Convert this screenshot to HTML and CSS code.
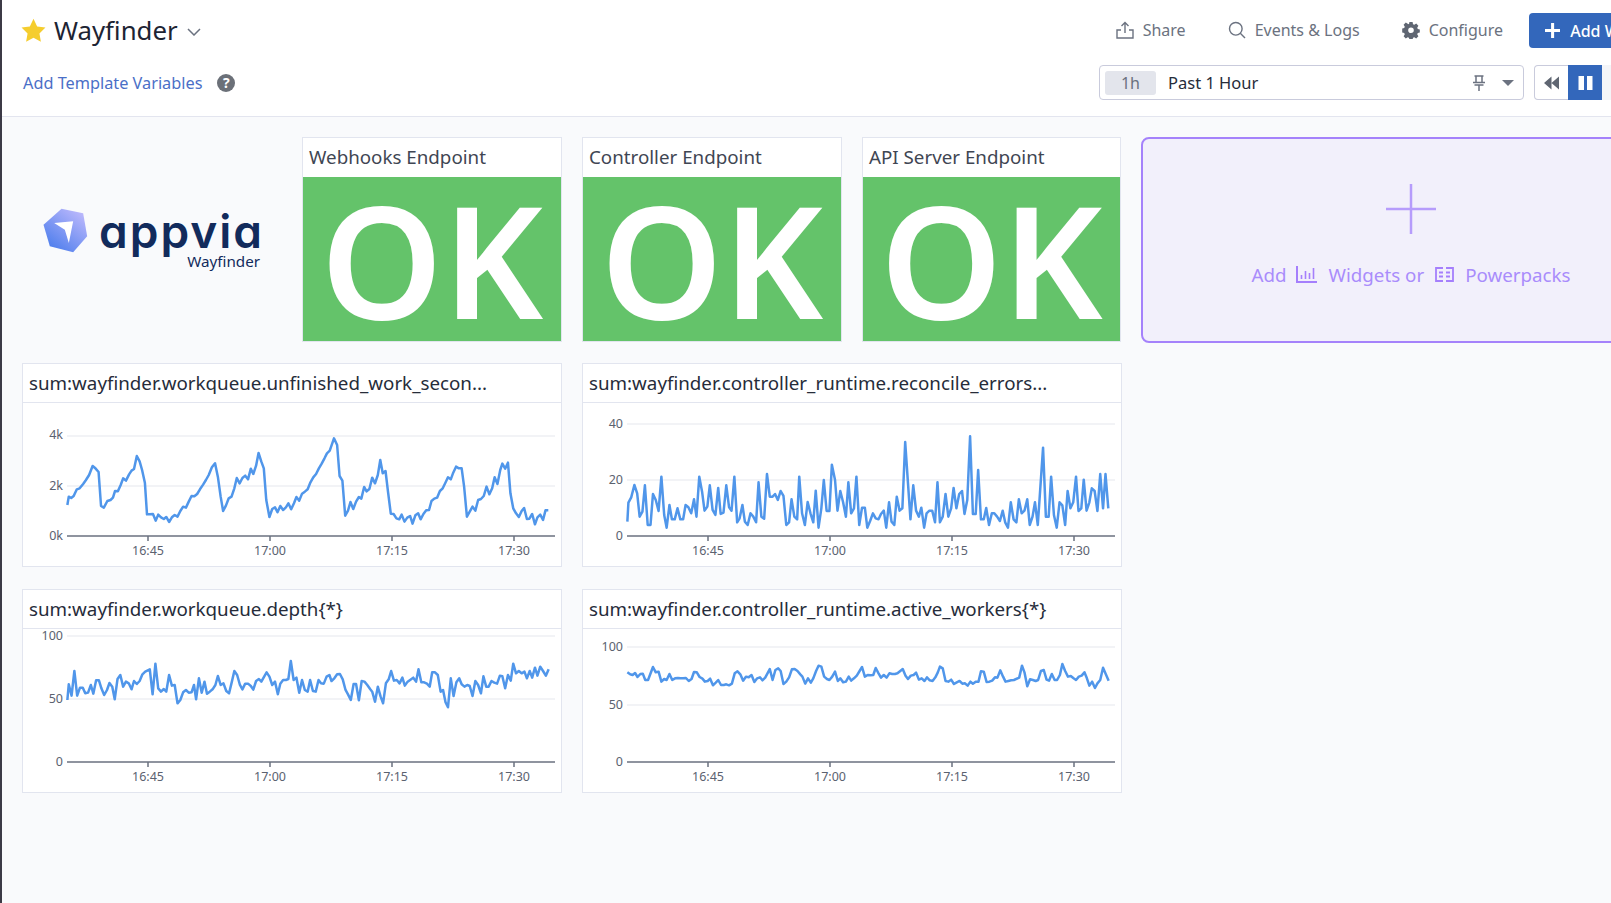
FILE: index.html
```html
<!DOCTYPE html>
<html lang="en">
<head>
  <meta charset="UTF-8" />
  <meta name="viewport" content="width=device-width, initial-scale=1.0" />
  <title>Wayfinder</title>
  <link rel="stylesheet" href="styles.css">
</head>
<body>
<div class="page">

  <header class="header">
    <div class="row row-top">
      <div class="title-group">
        <svg class="star" viewBox="0 0 24 24"><path d="M12 .8l3.5 7.3 8 1.1-5.8 5.6 1.4 8L12 18.9l-7.1 3.9 1.4-8L.5 9.2l8-1.1z"/></svg>
        <h1>Wayfinder</h1>
        <svg class="chevron" viewBox="0 0 14 8"><path d="M1 1l6 6 6-6"/></svg>
      </div>
      <nav class="actions">
        <a class="action">
          <svg viewBox="0 0 18 18"><path d="M9 12V1.5M5.5 5L9 1.5 12.5 5M5 9H1v8h16V9h-4"/></svg>
          Share
        </a>
        <a class="action">
          <svg viewBox="0 0 18 18"><circle cx="7.8" cy="7.8" r="6.3"/><path d="M12.3 12.3L17 17"/></svg>
          Events &amp; Logs
        </a>
        <a class="action">
          <svg class="gear" viewBox="0 0 18 18"><path fill-rule="evenodd" d="M7.4 1h3.2l.4 2.2 1.3.6 1.9-1.2 2.2 2.2-1.2 1.9.6 1.3 2 .4v3.2l-2 .4-.6 1.3 1.2 1.9-2.2 2.2-1.9-1.2-1.3.6-.4 2H7.4l-.4-2-1.3-.6-1.9 1.2-2.2-2.2 1.2-1.9-.6-1.3-2-.4V7.4l2-.4.6-1.3-1.2-1.9 2.2-2.2 1.9 1.2L7 3.2zM9 6.4a2.8 2.8 0 100 5.6 2.8 2.8 0 000-5.6z"/></svg>
          Configure
        </a>
        <button class="add-btn">
          <svg viewBox="0 0 17 17"><path d="M8.5 0v17M0 8.5h17"/></svg>
          Add Widgets
        </button>
      </nav>
    </div>

    <div class="row row-bottom">
      <div class="template-vars">
        <a class="template-link">Add Template Variables</a>
        <span class="help">?</span>
      </div>
      <div class="time-controls">
        <div class="time-box">
          <span class="time-pill">1h</span>
          <span class="time-label">Past 1 Hour</span>
          <svg class="pin" viewBox="0 0 14 16"><path d="M2.5 1h9M4 1v6M10 1v6M1 7.5h12M2.5 10h9M7 10v6"/></svg>
          <span class="caret"></span>
        </div>
        <div class="playback">
          <button class="play-btn">
            <svg viewBox="0 0 16 14"><path d="M8 0v14L0 7zM16 0v14L8 7z"/></svg>
          </button>
          <button class="play-btn play-active">
            <svg viewBox="0 0 14 14"><path d="M0 0h5.5v14H0zM8.5 0H14v14H8.5z"/></svg>
          </button>
          <button class="play-btn play-off"></button>
        </div>
      </div>
    </div>
  </header>

  <main class="board">
    <div class="top-row">
      <div class="logo-widget">
        <svg class="logo-mark" viewBox="70 85 134 135">
          <defs>
            <linearGradient id="hexFill" x1="0.15" y1="0.95" x2="0.85" y2="0.05">
              <stop offset="0" stop-color="#4a7cec"/>
              <stop offset="1" stop-color="#bcb8fc"/>
            </linearGradient>
          </defs>
          <path fill="url(#hexFill)" d="M71 135l54-48 65 14 12 69-42 48-70-18z"/>
          <path fill="#fff" d="M103 130l57-5-13 65-12-40z"/>
        </svg>
        <div class="logo-text">
          <span class="logo-word">appvia</span>
          <span class="logo-sub">Wayfinder</span>
        </div>
      </div>

      <section class="card status-card">
        <h2 class="card-title">Webhooks Endpoint</h2>
        <div class="status-ok">OK</div>
      </section>
      <section class="card status-card">
        <h2 class="card-title">Controller Endpoint</h2>
        <div class="status-ok">OK</div>
      </section>
      <section class="card status-card">
        <h2 class="card-title">API Server Endpoint</h2>
        <div class="status-ok">OK</div>
      </section>

      <div class="add-widget">
        <svg class="add-plus" viewBox="0 0 50 50"><path d="M25 0v50M0 25h50"/></svg>
        <div class="add-hint">
          <span>Add</span>
          <svg class="hint-icon" viewBox="0 0 21 17"><path d="M1 0v16h20"/><path class="hint-bars" d="M5.5 13V9M9.5 13V5M13.5 13V7M17.5 13V2"/></svg>
          <span>Widgets or</span>
          <svg class="hint-icon hint-pack" viewBox="0 0 19 15"><path d="M8 1H1v13h7M11 1h7v13h-7M4 5.5h4M11 5.5h4M4 9.5h4M11 9.5h4"/></svg>
          <span>Powerpacks</span>
        </div>
      </div>
    </div>

    <div class="graph-grid">
      <section class="card graph-card">
        <h2 class="card-title">sum:wayfinder.workqueue.unfinished_work_secon...</h2>
        <svg class="chart" viewBox="0 0 538 163">
          <path class="grid" d="M44 33H532M44 83H532"/>
          <path class="axis" d="M44 133H532M125 133v5M247 133v5M369 133v5M491 133v5"/>
          <text class="y-label" x="40" y="36">4k</text>
          <text class="y-label" x="40" y="87">2k</text>
          <text class="y-label" x="40" y="137">0k</text>
          <text class="x-label" x="125" y="152">16:45</text>
          <text class="x-label" x="247" y="152">17:00</text>
          <text class="x-label" x="369" y="152">17:15</text>
          <text class="x-label" x="491" y="152">17:30</text>
          <g transform="translate(-3 -43) scale(.3508 .3333)">
            <polyline class="series" points="135,435 139,410 146,414 153,408 162,388 170,385 180,372 188,360 197,345 207,318 215,325 224,336 231,438 239,443 249,423 258,420 265,413 271,393 279,394 287,375 294,355 302,362 311,343 318,332 325,327 333,288 341,304 348,330 356,368 362,463 370,463 379,462 387,482 394,464 402,472 410,477 417,471 425,486 433,472 441,465 449,470 457,453 465,440 473,443 481,425 489,408 497,409 505,402 513,388 522,374 530,360 538,345 547,322 556,310 564,350 572,410 579,453 587,437 595,415 603,410 611,385 618,354 626,370 634,354 642,347 650,358 658,326 665,342 673,317 680,279 688,305 695,325 702,420 711,471 719,447 727,442 734,457 742,438 750,450 758,442 765,430 773,448 781,430 788,411 796,422 804,401 812,395 820,388 828,367 836,352 844,342 852,325 860,311 868,295 875,280 883,272 895,235 904,255 911,348 919,362 927,467 935,452 942,426 950,447 958,425 966,411 973,416 981,381 988,394 996,387 1004,353 1012,370 1020,345 1027,300 1034,340 1042,333 1049,395 1057,461 1065,462 1073,475 1081,478 1088,464 1096,485 1104,473 1112,468 1119,491 1127,466 1135,460 1142,478 1150,462 1158,451 1166,450 1173,423 1181,416 1189,413 1197,393 1205,385 1212,370 1220,352 1228,358 1235,338 1243,320 1251,325 1259,325 1266,380 1274,470 1282,455 1290,440 1298,452 1306,420 1314,417 1322,408 1330,380 1338,403 1346,385 1353,352 1361,372 1369,330 1375,311 1383,326 1391,308 1398,400 1406,445 1414,460 1422,471 1430,453 1437,444 1445,477 1452,476 1460,462 1468,493 1475,472 1483,464 1491,480 1498,451 1506,451"/>
          </g>
        </svg>
      </section>

      <section class="card graph-card">
        <h2 class="card-title">sum:wayfinder.controller_runtime.reconcile_errors...</h2>
        <svg class="chart" viewBox="0 0 538 163">
          <path class="grid" d="M44 21H532M44 77H532"/>
          <path class="axis" d="M44 133H532M125 133v5M247 133v5M369 133v5M491 133v5"/>
          <text class="y-label" x="40" y="25">40</text>
          <text class="y-label" x="40" y="81">20</text>
          <text class="y-label" x="40" y="137">0</text>
          <text class="x-label" x="125" y="152">16:45</text>
          <text class="x-label" x="247" y="152">17:00</text>
          <text class="x-label" x="369" y="152">17:15</text>
          <text class="x-label" x="491" y="152">17:30</text>
          <g transform="translate(-3 -43) scale(.3508 .3333)">
            <polyline class="series" points="135,485 138,428 146,412 155,375 163,400 170,470 178,455 185,376 193,495 201,495 208,402 216,420 224,453 232,350 240,465 247,503 255,435 262,478 270,478 278,445 286,478 294,478 301,435 309,442 317,460 325,418 332,470 340,350 348,395 355,452 363,440 370,376 378,450 386,465 394,384 401,462 409,458 417,376 425,442 432,452 440,350 448,487 455,475 463,435 470,485 478,495 486,460 494,470 502,487 509,367 517,470 525,476 533,342 541,410 549,410 556,402 564,420 572,393 580,408 588,495 596,487 603,418 611,470 619,478 625,350 633,460 641,495 649,426 657,460 665,487 672,392 680,503 688,445 695,360 703,453 711,453 718,314 727,360 734,452 742,393 750,427 758,470 765,367 773,460 781,445 788,350 796,495 804,443 812,443 819,503 827,483 835,460 843,475 851,478 858,462 866,452 873,503 881,427 888,485 896,495 903,410 911,452 919,445 927,246 935,370 942,478 950,376 958,452 966,470 973,443 981,503 988,460 996,452 1004,452 1012,487 1019,367 1026,487 1034,470 1042,402 1050,470 1058,445 1065,384 1073,445 1081,402 1089,393 1096,462 1104,420 1112,229 1120,462 1128,462 1135,330 1143,478 1151,478 1158,444 1166,495 1174,460 1181,460 1189,470 1197,483 1205,452 1212,487 1220,503 1228,427 1236,478 1244,487 1251,418 1259,460 1267,452 1275,418 1282,495 1290,470 1297,427 1305,495 1320,263 1328,470 1336,470 1343,350 1351,465 1359,503 1367,427 1375,436 1383,495 1390,393 1398,445 1406,427 1414,350 1421,453 1429,445 1436,359 1444,452 1452,427 1459,385 1467,393 1475,453 1483,342 1491,445 1498,342 1506,445"/>
          </g>
        </svg>
      </section>

      <section class="card graph-card">
        <h2 class="card-title">sum:wayfinder.workqueue.depth{*}</h2>
        <svg class="chart" viewBox="0 0 538 163">
          <path class="grid" d="M44 7H532M44 70H532"/>
          <path class="axis" d="M44 133H532M125 133v5M247 133v5M369 133v5M491 133v5"/>
          <text class="y-label" x="40" y="11">100</text>
          <text class="y-label" x="40" y="74">50</text>
          <text class="y-label" x="40" y="137">0</text>
          <text class="x-label" x="125" y="152">16:45</text>
          <text class="x-label" x="247" y="152">17:00</text>
          <text class="x-label" x="369" y="152">17:15</text>
          <text class="x-label" x="491" y="152">17:30</text>
          <g transform="translate(-3 -44) scale(.3508 .3333)">
            <polyline class="series" points="135,345 139,298 147,332 155,258 163,332 171,308 179,308 186,325 194,323 202,300 209,326 217,286 225,286 232,310 240,330 248,315 255,294 263,305 270,343 278,282 286,270 294,305 302,290 310,295 318,313 325,288 333,297 341,288 349,268 357,260 370,253 378,328 386,236 394,310 402,320 410,312 417,320 425,270 433,302 441,300 449,355 457,345 465,322 473,315 481,323 489,322 496,300 502,343 510,280 518,323 526,290 533,326 541,320 549,313 557,300 564,273 572,300 580,295 588,318 596,325 604,290 611,258 619,270 627,300 634,313 642,296 650,296 658,303 665,314 673,288 681,282 688,290 696,275 703,262 711,275 719,300 727,290 735,328 742,296 750,285 758,285 765,282 772,228 780,285 788,278 796,323 804,285 812,315 820,320 827,285 835,318 843,320 851,285 858,295 866,296 874,275 882,270 888,288 896,280 904,268 912,267 920,283 928,315 935,328 943,345 951,297 958,297 966,346 974,288 982,290 990,300 998,312 1004,320 1012,350 1020,305 1028,335 1035,355 1043,295 1051,283 1058,258 1066,287 1074,285 1082,295 1090,278 1097,302 1105,290 1113,284 1121,278 1129,290 1136,253 1144,292 1152,292 1160,296 1168,305 1175,262 1183,262 1191,270 1199,320 1206,315 1213,352 1220,367 1228,280 1236,333 1244,292 1252,280 1259,298 1267,305 1275,300 1282,303 1290,333 1298,288 1306,300 1314,325 1321,274 1329,305 1336,305 1344,288 1352,293 1360,296 1368,272 1375,274 1383,310 1391,270 1399,287 1406,236 1414,265 1422,258 1430,265 1438,260 1445,280 1453,258 1460,278 1468,248 1475,272 1483,245 1491,258 1499,272 1507,253"/>
          </g>
        </svg>
      </section>

      <section class="card graph-card">
        <h2 class="card-title">sum:wayfinder.controller_runtime.active_workers{*}</h2>
        <svg class="chart" viewBox="0 0 538 163">
          <path class="grid" d="M44 18H532M44 76H532"/>
          <path class="axis" d="M44 133H532M125 133v5M247 133v5M369 133v5M491 133v5"/>
          <text class="y-label" x="40" y="22">100</text>
          <text class="y-label" x="40" y="80">50</text>
          <text class="y-label" x="40" y="137">0</text>
          <text class="x-label" x="125" y="152">16:45</text>
          <text class="x-label" x="247" y="152">17:00</text>
          <text class="x-label" x="369" y="152">17:15</text>
          <text class="x-label" x="491" y="152">17:30</text>
          <g transform="translate(-3 -44) scale(.3508 .3333)">
            <polyline class="series" points="135,262 143,268 150,270 157,264 164,276 172,267 179,266 186,285 194,285 208,246 216,262 224,260 232,290 240,282 247,285 255,267 263,285 271,280 279,279 287,280 294,280 302,279 310,288 318,282 325,261 333,262 341,276 349,281 356,290 364,288 371,281 379,301 387,293 394,285 402,300 410,300 417,298 425,301 433,296 441,265 449,259 457,268 465,287 473,275 481,277 489,270 497,291 505,280 513,277 520,286 528,278 536,262 541,252 549,285 557,255 565,250 572,258 580,297 588,290 596,277 604,253 612,252 620,258 628,268 634,275 642,296 650,280 658,293 665,280 673,258 680,242 688,245 696,275 704,282 711,285 719,275 727,260 735,288 742,280 750,292 758,290 766,275 773,287 781,280 789,272 797,258 804,246 812,275 820,270 828,271 836,270 843,249 851,265 858,278 866,270 874,278 882,265 890,267 898,267 905,265 913,258 920,252 928,272 935,282 943,272 951,270 958,263 966,284 974,280 982,288 989,277 997,286 1005,288 1013,277 1020,262 1026,245 1034,250 1042,288 1050,290 1058,284 1066,297 1074,292 1082,288 1090,296 1097,295 1105,302 1113,290 1120,296 1128,290 1136,290 1143,259 1151,260 1159,291 1167,290 1175,287 1183,277 1190,278 1198,256 1206,275 1213,290 1221,288 1229,286 1237,285 1252,278 1260,242 1267,262 1275,304 1283,283 1291,285 1299,288 1306,285 1314,258 1322,255 1330,284 1337,287 1345,267 1353,285 1360,285 1368,270 1375,237 1383,258 1391,275 1399,273 1407,280 1414,285 1422,275 1430,272 1438,262 1445,280 1452,302 1460,290 1468,309 1475,295 1483,285 1491,248 1499,268 1507,287"/>
          </g>
        </svg>
      </section>
    </div>
  </main>
</div>
</body>
</html>
```

FILE: styles.css
```css
* {
  box-sizing: border-box;
}

html, body {
  margin: 0;
  height: 100%;
  overflow: hidden;
}

body {
  font-family: "Noto Sans", sans-serif;
  background-color: #f9fafc;
  border-left: 2px solid #3c3a46;
  color: #262c3a;
}

.page {
  width: 1700px;
}

/* header */
.header {
  background-color: #fff;
  border-bottom: 1px solid #e3e5ef;
  height: 117px;
  padding: 13px 19px 0 21px;
}

.row {
  display: flex;
  align-items: center;
  justify-content: space-between;
}

.row-top {
  height: 35px;
}

.row-bottom {
  height: 35px;
  margin-top: 17px;
}

.title-group {
  display: flex;
  align-items: center;
  margin-left: -2px;
}

.star {
  width: 25px;
  height: 25px;
  fill: #f5cd2e;
}

h1 {
  font-size: 25.8px;
  font-weight: 400;
  margin: 0 0 2px 8px;
  color: #1d2433;
}

.chevron {
  width: 14px;
  height: 8px;
  margin: 3px 0 0 9px;
  fill: none;
  stroke: #6b7280;
  stroke-width: 1.5;
}

.actions {
  display: flex;
  align-items: center;
}

.action {
  display: flex;
  align-items: center;
  gap: 9px;
  margin: 0 42px 2px 0;
  font-size: 16px;
  color: #6b7280;
}

.action svg {
  width: 18px;
  height: 18px;
  fill: none;
  stroke: #6b7280;
  stroke-width: 1.4;
}

.action svg.gear {
  fill: #5f6672;
  stroke: none;
}

.add-btn {
  display: flex;
  align-items: center;
  gap: 10px;
  height: 35px;
  width: 154px;
  margin-left: -16px;
  padding: 0 16px 0 16px;
  border: none;
  border-radius: 4px;
  background-color: #3367bb;
  color: #fff;
  font-family: inherit;
  font-size: 16px;
  font-weight: 500;
  white-space: nowrap;
}

.add-btn svg {
  width: 17px;
  height: 17px;
  fill: none;
  stroke: #fff;
  stroke-width: 3.4;
}

.template-vars {
  display: flex;
  align-items: center;
  gap: 15px;
}

.template-link {
  font-size: 16.3px;
  color: #4a6fc7;
}

.help {
  width: 18px;
  height: 18px;
  border-radius: 50%;
  background-color: #6b7078;
  color: #fff;
  font-size: 14px;
  font-weight: 700;
  line-height: 18px;
  text-align: center;
}

.time-controls {
  display: flex;
  align-items: center;
  gap: 10px;
  margin-right: 47px;
}

.time-box {
  display: flex;
  align-items: center;
  width: 425px;
  height: 35px;
  padding: 0 9px 0 5px;
  background-color: #fff;
  border: 1px solid #c9cbdc;
  border-radius: 4px;
}

.time-pill {
  width: 51px;
  height: 24px;
  border-radius: 3px;
  background-color: #e3e5ec;
  color: #6b7280;
  font-size: 16px;
  line-height: 24px;
  text-align: center;
}

.time-label {
  flex: 1;
  margin-left: 12px;
  font-size: 16.5px;
  color: #262c3a;
}

.pin {
  width: 14px;
  height: 16px;
  margin-right: 16px;
  fill: none;
  stroke: #6b7280;
  stroke-width: 1.5;
}

.caret {
  width: 0;
  height: 0;
  border-left: 6px solid transparent;
  border-right: 6px solid transparent;
  border-top: 6px solid #6b7280;
}

.playback {
  display: flex;
  width: 102px;
  height: 35px;
  border-radius: 4px;
  overflow: hidden;
  box-shadow: inset 0 0 0 1px #c9cbdc;
}

.play-btn {
  display: flex;
  align-items: center;
  justify-content: center;
  width: 34px;
  padding: 0;
  border: none;
  background-color: transparent;
}

.play-btn svg {
  width: 15px;
  height: 14px;
  fill: #5f6672;
}

.play-active {
  background-color: #3367bb;
}

.play-active svg {
  fill: #fff;
}

.play-off {
  background-color: #f4f5f8;
}

/* board */
.board {
  padding: 20px 0 0 20px;
}

.top-row {
  display: grid;
  grid-template-columns: 260px 260px 260px 259px 540px;
  column-gap: 20px;
  height: 206px;
}

.card {
  background-color: #fff;
  border: 1px solid #e2e5ef;
}

.card-title {
  height: 39px;
  margin: 0;
  padding: 0 6px;
  font-size: 18.75px;
  font-weight: 400;
  line-height: 37px;
  color: #262c3a;
  white-space: nowrap;
  overflow: hidden;
}

.status-card .card-title {
  color: #3f4653;
}

.status-card {
  align-self: start;
  height: 205px;
}

.status-ok {
  height: 164px;
  background-color: #64c36a;
  color: #fff;
  font-size: 155px;
  font-weight: 600;
  line-height: 163px;
  text-align: center;
}

/* logo */
.logo-widget {
  display: flex;
  align-items: flex-start;
  padding: 71px 0 0 21px;
}

.logo-mark {
  width: 45px;
  height: 45px;
}

.logo-text {
  display: flex;
  flex-direction: column;
  align-items: flex-end;
  width: 165px;
  margin-left: 11px;
  color: #122b5c;
}

.logo-word {
  font-family: Inter, sans-serif;
  font-feature-settings: "cv11";
  font-size: 46px;
  font-weight: 600;
  letter-spacing: 2px;
  line-height: 46px;
}

.logo-sub {
  font-size: 15.2px;
  line-height: 20px;
  margin: -3px 4px 0 0;
}

/* add widget box */
.add-widget {
  display: flex;
  flex-direction: column;
  align-items: center;
  padding-top: 45px;
  background-color: #f2f0fb;
  border: 2px solid #a582fb;
  border-radius: 8px;
}

.add-plus {
  width: 50px;
  height: 50px;
  fill: none;
  stroke: #b69cfb;
  stroke-width: 2.5;
}

.add-hint {
  display: flex;
  align-items: center;
  margin-top: 28px;
  font-size: 18.75px;
  color: #a98cfb;
}

.hint-icon {
  width: 21px;
  height: 17px;
  margin: 0 12px 0 9px;
  fill: none;
  stroke: #a57ffc;
  stroke-width: 2;
}

.hint-bars {
  stroke-width: 1.6;
}

.hint-pack {
  width: 19px;
  height: 15px;
  margin: 0 11px 0 11px;
  stroke-width: 1.8;
}

/* graphs */
.graph-grid {
  display: grid;
  grid-template-columns: repeat(2, 540px);
  grid-auto-rows: 204px;
  column-gap: 20px;
  row-gap: 22px;
  margin-top: 20px;
}

.graph-card .card-title {
  border-bottom: 1px solid #e2e5ef;
}

.chart {
  display: block;
  width: 538px;
  height: 163px;
  overflow: visible;
}

.grid {
  fill: none;
  stroke: #eeeff3;
  stroke-width: 1.5;
}

.axis {
  fill: none;
  stroke: #6b7280;
  stroke-width: 1.5;
}

.y-label, .x-label {
  font-family: "Noto Sans", sans-serif;
  font-size: 12.5px;
  fill: #5b6270;
}

.y-label {
  text-anchor: end;
}

.x-label {
  text-anchor: middle;
}

.series {
  fill: none;
  stroke: #5096ea;
  stroke-width: 2.5;
  stroke-linejoin: round;
  vector-effect: non-scaling-stroke;
}
```
